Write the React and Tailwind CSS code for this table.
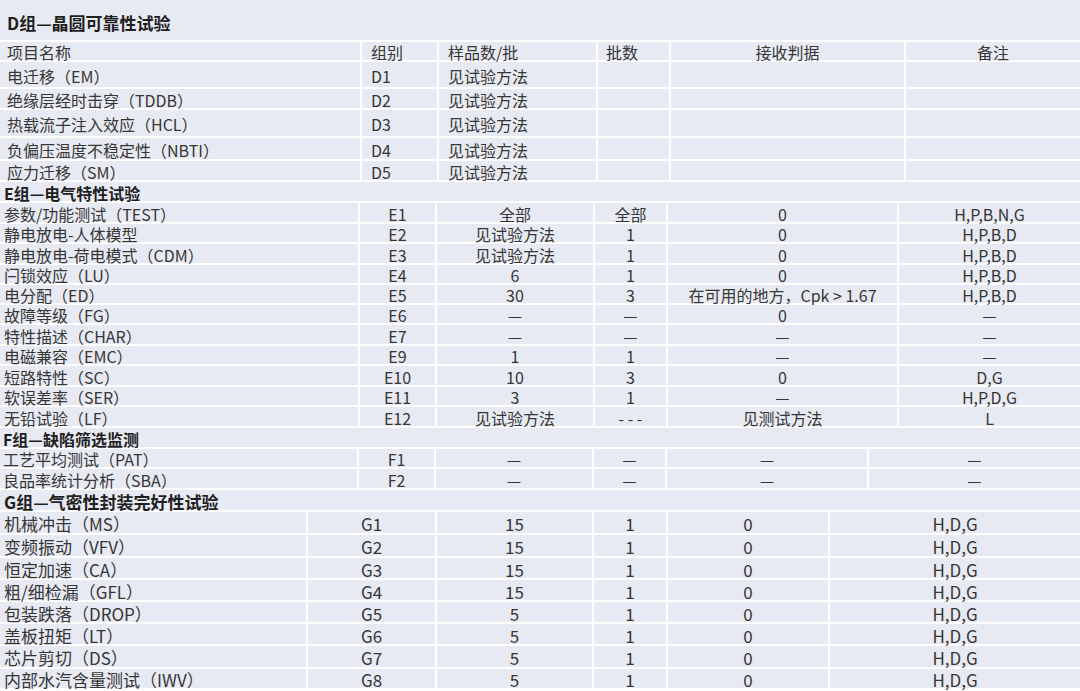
const D = [
  ["项目名称", "组别", "样品数/批", "批数", "接收判据", "备注", "h-[18px]"],
  ["电迁移（EM）", "D1", "见试验方法", "", "", "", "h-[25px]"],
  ["绝缘层经时击穿（TDDB）", "D2", "见试验方法", "", "", "", "h-[19px]"],
  ["热载流子注入效应（HCL）", "D3", "见试验方法", "", "", "", "h-[26px]"],
  ["负偏压温度不稳定性（NBTI）", "D4", "见试验方法", "", "", "", "h-[21px]"],
  ["应力迁移（SM）", "D5", "见试验方法", "", "", "", "h-[19px]"],
];

const E = [
  ["参数/功能测试（TEST）", "E1", "全部", "全部", "0", "H,P,B,N,G", "h-[19px]"],
  ["静电放电-人体模型", "E2", "见试验方法", "1", "0", "H,P,B,D", "h-[18px]"],
  ["静电放电-荷电模式（CDM）", "E3", "见试验方法", "1", "0", "H,P,B,D", "h-[19px]"],
  ["闩锁效应（LU）", "E4", "6", "1", "0", "H,P,B,D", "h-[18px]"],
  ["电分配（ED）", "E5", "30", "3", "在可用的地方，Cpk > 1.67", "H,P,B,D", "h-[18px]"],
  ["故障等级（FG）", "E6", "—", "—", "0", "—", "h-[18px]"],
  ["特性描述（CHAR）", "E7", "—", "—", "—", "—", "h-[19px]"],
  ["电磁兼容（EMC）", "E9", "1", "1", "—", "—", "h-[18px]"],
  ["短路特性（SC）", "E10", "10", "3", "0", "D,G", "h-[19px]"],
  ["软误差率（SER）", "E11", "3", "1", "—", "H,P,D,G", "h-[18px]"],
  ["无铅试验（LF）", "E12", "见试验方法", "- - -", "见测试方法", "L", "h-[19px]"],
];

const F = [
  ["工艺平均测试（PAT）", "F1", "—", "—", "—", "—", "h-[18px]"],
  ["良品率统计分析（SBA）", "F2", "—", "—", "—", "—", "h-[19px]"],
];

const G = [
  ["机械冲击（MS）", "G1", "15", "1", "0", "H,D,G", "h-[21px]"],
  ["变频振动（VFV）", "G2", "15", "1", "0", "H,D,G", "h-[21px]"],
  ["恒定加速（CA）", "G3", "15", "1", "0", "H,D,G", "h-[20px]"],
  ["粗/细检漏（GFL）", "G4", "15", "1", "0", "H,D,G", "h-[20px]"],
  ["包装跌落（DROP）", "G5", "5", "1", "0", "H,D,G", "h-[20px]"],
  ["盖板扭矩（LT）", "G6", "5", "1", "0", "H,D,G", "h-[20px]"],
  ["芯片剪切（DS）", "G7", "5", "1", "0", "H,D,G", "h-[21px]"],
  ["内部水汽含量测试（IWV）", "G8", "5", "1", "0", "H,D,G", "h-[19px]"],
];

// light lavender cell, white 2px grid lines come from the gaps
const cell = "bg-[#e8eaf3] flex items-center whitespace-nowrap leading-none";

// column widths per section (each section has its own grid)
const dCls = [
  "w-[360px] pl-[7px]",
  "w-[75px] pl-[9px]",
  "w-[157px] pl-[9px]",
  "w-[71px] pl-[8px]",
  "w-[233px] justify-center",
  "flex-1 justify-center",
];
const eCls = [
  "w-[358px] pl-[4px]",
  "w-[75px] justify-center",
  "w-[156px] justify-center",
  "w-[71px] justify-center",
  "w-[229px] justify-center",
  "flex-1 justify-center",
];
const fCls = [
  "w-[357px] pl-[3px]",
  "w-[75px] justify-center",
  "w-[156px] justify-center",
  "w-[71px] justify-center",
  "w-[200px] justify-center",
  "flex-1 justify-center",
];
const gCls = [
  "w-[306px] pl-[4px]",
  "w-[127px] justify-center",
  "w-[155px] justify-center",
  "w-[72px] justify-center",
  "w-[160px] justify-center",
  "flex-1 justify-center",
];

function Header({ text, cls }) {
  return <div className={`${cell} font-bold text-[#1f1f1f] ${cls}`}>{text}</div>;
}

function Row({ r, cols, size }) {
  return (
    <div className={`flex gap-[2px] ${size} ${r[6]}`}>
      {cols.map((c, i) => (
        <div key={i} className={`${cell} ${c} pt-[2px]`}>
          {r[i]}
        </div>
      ))}
    </div>
  );
}

export default function App() {
  return (
    <div className="w-[1080px] h-[691px] bg-white flex flex-col gap-[2px] text-[#363636] overflow-hidden font-['Noto_Sans_CJK_SC','Noto_Sans',sans-serif]">
      <Header text="D组—晶圆可靠性试验" cls="h-[40px] pl-[7px] pt-[4px] text-[17px]" />
      {D.map((r, i) => (
        <Row key={"d" + i} r={r} cols={dCls} size="text-[16px]" />
      ))}
      <Header text="E组—电气特性试验" cls="h-[19px] pl-[4px] pt-[2px] text-[16px]" />
      {E.map((r, i) => (
        <Row key={"e" + i} r={r} cols={eCls} size="text-[16px]" />
      ))}
      <Header text="F组—缺陷筛选监测" cls="h-[19px] pl-[3px] pt-[2px] text-[16px]" />
      {F.map((r, i) => (
        <Row key={"f" + i} r={r} cols={fCls} size="text-[16px]" />
      ))}
      <Header text="G组—气密性封装完好性试验" cls="h-[20px] pl-[4px] pt-[3px] text-[17px]" />
      {G.map((r, i) => (
        <Row key={"g" + i} r={r} cols={gCls} size="text-[17px]" />
      ))}
    </div>
  );
}
